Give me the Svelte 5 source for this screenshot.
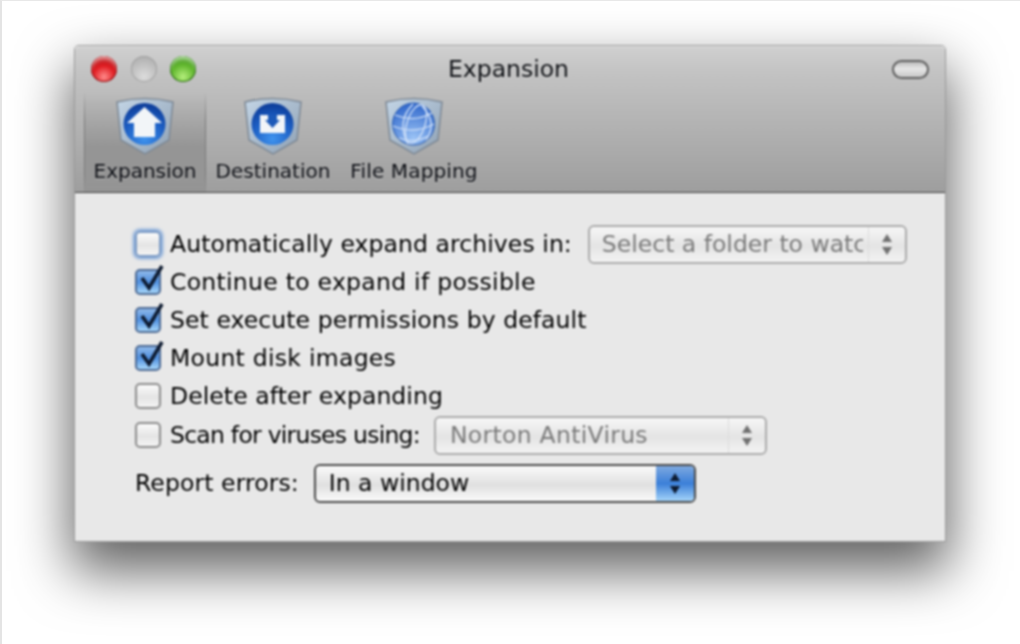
<script>
  const rows = [
    { label: 'Automatically expand archives in:', checked: false, focus: true, cls: 'fit-a', select: { text: 'Select a folder to watch', cls: 'folder' } },
    { label: 'Continue to expand if possible', checked: true, cls: 'fit-b' },
    { label: 'Set execute permissions by default', checked: true, cls: 'fit-a' },
    { label: 'Mount disk images', checked: true, cls: 'fit-b' },
    { label: 'Delete after expanding', checked: false, cls: 'fit-a' },
    { label: 'Scan for viruses using:', checked: false, cls: 'fit-c', scan: true, select: { text: 'Norton AntiVirus', cls: 'norton' } }
  ];
</script>

<div class="page">
  <div class="window">
    <header class="toolbar">
      <div class="titlebar">
        <div class="lights">
          <span class="light red"></span>
          <span class="light grey"></span>
          <span class="light green"></span>
        </div>
        <div class="title">Expansion</div>
        <span class="pill"></span>
      </div>
      <nav class="tabs">
        <div class="tab selected">
          <svg viewBox="0 0 60 60" width="60" height="60">
            <defs>
              <linearGradient id="sh" x1="0" y1="0" x2="1" y2="1"><stop offset="0" stop-color="#c3d5e6"/><stop offset="1" stop-color="#8fa1b4"/></linearGradient>
              <radialGradient id="ball" cx="0.5" cy="0.85" r="0.8"><stop offset="0" stop-color="#3f93ee"/><stop offset="0.6" stop-color="#1d5fc4"/><stop offset="1" stop-color="#0e3f9c"/></radialGradient>
            </defs>
            <path d="M2 5 Q30 -2 58 5 L54 43 L30 57 L6 43 Z" fill="url(#sh)" stroke="#7d8894" stroke-width="1.5"/>
            <circle cx="29.500" cy="27" r="21" fill="url(#ball)"/>
            <path d="M29.500 10 L47 26 L40 26 L40 40 L19 40 L19 26 L12 26 Z" fill="#f2f5f8"/>
          </svg>
          <span>Expansion</span>
        </div>
        <div class="tab dest">
          <svg viewBox="0 0 60 60" width="60" height="60">
            <path d="M2 5 Q30 -2 58 5 L54 43 L30 57 L6 43 Z" fill="url(#sh)" stroke="#7d8894" stroke-width="1.5"/>
            <circle cx="29.500" cy="27" r="21" fill="url(#ball)"/>
            <path d="M17 18 L42 18 L42 36 L17 36 Z" fill="#f2f5f8"/>
            <path d="M25 18 L34 18 L34 23 L37 23 L29.500 31 L22 23 L25 23 Z" fill="#1c59b8"/>
          </svg>
          <span>Destination</span>
        </div>
        <div class="tab map">
          <svg viewBox="0 0 60 60" width="60" height="60">
            <defs>
              <radialGradient id="globe" cx="0.5" cy="0.85" r="0.85"><stop offset="0" stop-color="#9cc4f6"/><stop offset="1" stop-color="#2f66ca"/></radialGradient>
            </defs>
            <path d="M2 5 Q30 -2 58 5 L54 43 L30 57 L6 43 Z" fill="url(#sh)" stroke="#7d8894" stroke-width="1.5"/>
            <circle cx="29.500" cy="27" r="21" fill="url(#globe)" stroke="#2a5bb0"/>
            <g fill="none" stroke="#d2e2f8" stroke-width="1.300">
              <ellipse cx="32" cy="27" rx="9" ry="20" transform="rotate(18 32 27)"/>
              <path d="M29 7 Q12 24 24 47 M38 9 Q54 26 42 43"/>
              <path d="M11 18 Q30 26 48 16 M9 29 Q30 38 50 27 M15 41 Q30 47 44 39"/>
            </g>
          </svg>
          <span>File Mapping</span>
        </div>
      </nav>
    </header>

    <main class="body">
      {#each rows as row}
        <div class="row" class:scan={row.scan}>
          <span class="check" class:on={row.checked} class:focus={row.focus}>
            {#if row.checked}
              <svg viewBox="0 0 28 30" width="28" height="30">
                <path d="M6 14 L13 24 L26 2" fill="none" stroke="#0d1a30" stroke-width="3.600"/>
              </svg>
            {/if}
          </span>
          <span class="label {row.cls}">{row.label}</span>
          {#if row.select}
            <div class="select disabled {row.select.cls}">
              <span class="value">{row.select.text}</span>
              <span class="arrows"><i class="up"></i><i class="down"></i></span>
            </div>
          {/if}
        </div>
      {/each}
      <div class="row report">
        <span class="label">Report errors:</span>
        <div class="select active">
          <span class="value">In a window</span>
          <span class="arrows"><i class="up"></i><i class="down"></i></span>
        </div>
      </div>
    </main>
  </div>
</div>

<style>
  :global(body) {
    margin: 0;
    background: #fff;
  }
  .page {
    box-sizing: border-box;
    width: 1020px;
    height: 644px;
    overflow: hidden;
    background: #fff;
    border-left: 2px solid #e4e4e4;
    border-top: 1px solid #e8e8e8;
    padding: 45px 0 0 73px;
    font-family: "DejaVu Sans", sans-serif;
    color: #000;
  }
  .window {
    width: 870px;
    height: 495px;
    display: flex;
    flex-direction: column;
    border-radius: 4px 4px 0 0;
    background: #e8e8e8;
    box-shadow: 0 0 0 1px #9a9a9a, 0 26px 54px 4px rgba(0, 0, 0, 0.62);
    filter: blur(0.8px);
  }
  .toolbar {
    height: 146px;
    background: linear-gradient(#d0d0d0, #c2c2c2 20%, #9e9e9e);
    border-radius: 4px 4px 0 0;
    border-bottom: 1px solid #3c3c3c;
    display: flex;
    flex-direction: column;
    box-shadow: inset 0 1px 0 #e2e2e2;
  }
  .titlebar {
    height: 46px;
    display: grid;
    grid-template-columns: 1fr auto 1fr;
    align-items: center;
    padding: 0 16px;
  }
  .lights {
    display: flex;
    gap: 13.500px;
  }
  .light {
    width: 26px;
    height: 26px;
    border-radius: 50%;
  }
  .red {
    background: radial-gradient(circle at 50% 80%, #ff8a8a, #e01d22 45%, #8f0d10 100%);
    box-shadow: inset 0 5px 4px -2px rgba(255, 210, 210, 0.8), inset 0 0 0 1px #8f1216;
  }
  .grey {
    background: radial-gradient(circle at 50% 80%, #dcdcdc, #bcbcbc 60%, #a6a6a6);
    box-shadow: inset 0 0 0 1px #a2a2a2;
  }
  .green {
    background: radial-gradient(circle at 50% 80%, #b4ee7c, #5fb52c 50%, #276f14);
    box-shadow: inset 0 5px 4px -2px rgba(225, 255, 210, 0.8), inset 0 0 0 1px #2c6a18;
  }
  .title {
    font-size: 23.500px;
    color: #0c0e12;
    text-shadow: 0 1px 0 rgba(255, 255, 255, 0.35);
    margin-top: -1px;
    margin-right: 3px;
  }
  .pill {
    justify-self: end;
    box-sizing: border-box;
    width: 37px;
    height: 19px;
    border-radius: 10px;
    border: 2px solid #5e5e5e;
    background: linear-gradient(#bcbcbc, #e6e6e6 45%, #c8c8c8);
  }
  .tabs {
    flex: 1;
    display: flex;
    padding-left: 9px;
  }
  .tab {
    display: flex;
    flex-direction: column;
    align-items: center;
    font-size: 20px;
    color: #080a10;
    text-shadow: 0 1px 0 rgba(255, 255, 255, 0.3);
    white-space: nowrap;
    padding-top: 5px;
    box-sizing: border-box;
  }
  .tab svg {
    display: block;
    margin-bottom: 2px;
  }
  .tab.selected {
    width: 122px;
    background: linear-gradient(rgba(90, 90, 90, 0), rgba(90, 90, 90, 0.28) 55%, rgba(90, 90, 90, 0.14));
    border-left: 1px solid;
    border-right: 1px solid;
    border-image: linear-gradient(rgba(110, 110, 110, 0), #7a7a7a 30%, #7a7a7a 80%, rgba(110, 110, 110, 0)) 1;
  }
  .tab.dest {
    width: 134px;
  }
  .tab.map {
    width: 148px;
    letter-spacing: 0.15px;
  }
  .body {
    flex: 1;
    padding: 32px 0 0 60px;
    display: flex;
    flex-direction: column;
    font-size: 23.500px;
  }
  .row {
    display: flex;
    align-items: center;
    height: 38px;
    white-space: nowrap;
  }
  .row.scan {
    margin-top: 1px;
  }
  .fit-a {
    letter-spacing: 0.08px;
  }
  .fit-b {
    letter-spacing: 0.28px;
  }
  .fit-c {
    letter-spacing: -0.75px;
  }
  .check {
    box-sizing: border-box;
    position: relative;
    flex: none;
    width: 26px;
    height: 26px;
    margin-right: 9px;
    border-radius: 5px;
    border: 2px solid #8c8c8c;
    background: linear-gradient(#fbfbfb, #e4e4e4 55%, #f4f4f4);
  }
  .check.on {
    border-color: #4d6a94;
    background: linear-gradient(#8fb8ea, #4f8fdf 50%, #a6d6fa);
  }
  .check.focus {
    border-color: #7e9cc4;
    box-shadow: 0 0 3px 2px #7ba3d8;
  }
  .check svg {
    position: absolute;
    left: -1px;
    top: -7px;
  }
  .select {
    box-sizing: border-box;
    display: flex;
    align-items: center;
    height: 39px;
    border-radius: 6px;
    overflow: hidden;
  }
  .select .value {
    flex: 1;
    min-width: 0;
    overflow: hidden;
    white-space: nowrap;
  }
  .select .arrows {
    flex: none;
    align-self: stretch;
    display: flex;
    flex-direction: column;
    align-items: center;
    justify-content: center;
    gap: 5px;
    width: 36px;
  }
  .arrows i {
    display: block;
    width: 0;
    height: 0;
    border-left: 5px solid transparent;
    border-right: 5px solid transparent;
  }
  .arrows .up {
    border-bottom: 8px solid currentColor;
  }
  .arrows .down {
    border-top: 8px solid currentColor;
  }
  .disabled {
    border: 2px solid #ababab;
    background: linear-gradient(#f6f6f6, #e4e4e4 55%, #f3f3f3);
    color: #7a7a7a;
  }
  .disabled .value {
    margin-left: 12px;
    margin-right: 5px;
  }
  .disabled .arrows {
    border-left: 1px solid #dcdcdc;
    color: #707070;
  }
  .folder {
    width: 319px;
    margin-left: 16px;
  }
  .norton {
    width: 333px;
    margin-left: 14px;
  }
  .norton .value {
    margin-left: 14px;
    letter-spacing: 0.3px;
  }
  .report {
    height: 40px;
    margin-top: 9px;
  }
  .report .label {
    letter-spacing: 0.1px;
    margin-right: 15px;
  }
  .active {
    width: 382px;
    border: 2px solid #4a4a4a;
    background: linear-gradient(#fafafa, #e0e0e0 55%, #fafafa);
    color: #000;
  }
  .active .value {
    padding-left: 13px;
  }
  .active .arrows {
    width: 38px;
    color: #0c1a30;
    background: linear-gradient(#7ea9e0, #3b7fd8 50%, #a4d4fa);
  }
</style>
